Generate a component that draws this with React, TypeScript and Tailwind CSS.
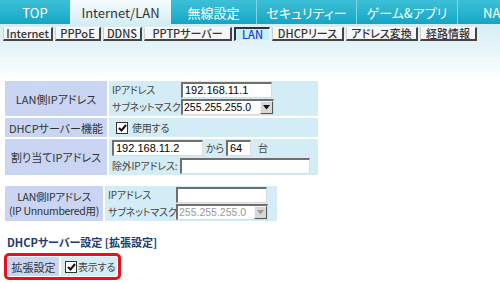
import React from "react";

const jp = "[font-family:'Noto_Sans_CJK_JP',sans-serif] [font-feature-settings:'palt']";

function Input({ value, w, disabled }: { value?: string; w: string; disabled?: boolean }) {
  return (
    <div
      className={`${w} shrink-0 h-[16px] bg-white border-t-2 border-l-2 border-t-[#6f6f6f] border-l-[#6f6f6f] border-b border-r border-b-[#dcdcdc] border-r-[#dcdcdc] flex items-center pl-[2px] text-[11px] leading-none [font-family:'Liberation_Sans',sans-serif] ${disabled ? "text-[#9a9a9a]" : "text-black"}`}
    >
      {value}
    </div>
  );
}

function Select({ value, w, disabled }: { value: string; w: string; disabled?: boolean }) {
  return (
    <div
      className={`${w} shrink-0 h-[16px] bg-white border-t-2 border-l-2 border-t-[#6f6f6f] border-l-[#6f6f6f] border-b border-r border-b-[#dcdcdc] border-r-[#dcdcdc] flex items-center text-[10.5px] leading-none [font-family:'Liberation_Sans',sans-serif] ${disabled ? "text-[#9a9a9a]" : "text-black"}`}
    >
      <span className="flex-1 pl-[1px]">{value}</span>
      <span className="w-[13px] h-[13px] bg-[#d8d8d8] border border-t-[#f4f4f4] border-l-[#f4f4f4] border-b-[#555] border-r-[#555] flex items-center justify-center">
        <svg width="7" height="5" viewBox="0 0 7 5">
          <path d="M0 0H7L3.5 4.5Z" fill={disabled ? "#9a9a9a" : "#111"} />
        </svg>
      </span>
    </div>
  );
}

function Check() {
  return (
    <span className="w-[12px] h-[12px] shrink-0 bg-white border border-[#333] flex items-center justify-center">
      <svg width="9" height="8" viewBox="0 0 9 8">
        <path d="M1 4L3.5 6.5L8 1" stroke="#111" strokeWidth="2" fill="none" />
      </svg>
    </span>
  );
}

const tabs = [
  { t: "TOP", w: "w-[70px]" },
  { t: "Internet/LAN", w: "w-[101px]", active: true },
  { t: "無線設定", w: "w-[85px]" },
  { t: "セキュリティー", w: "w-[100px]" },
  { t: "ゲーム&アプリ", w: "w-[101px]" },
  { t: "NAT", w: "w-[80px]", left: true },
];

const subs = [
  { t: "Internet", w: "w-[50px]" },
  { t: "PPPoE", w: "w-[46px]" },
  { t: "DDNS", w: "w-[39px]" },
  { t: "PPTPサーバー", w: "w-[88px]" },
  { t: "LAN", w: "w-[36px]", active: true },
  { t: "DHCPリース", w: "w-[72px]" },
  { t: "アドレス変換", w: "w-[72px]" },
  { t: "経路情報", w: "w-[57px]" },
];

const label = "bg-[#c9d5f2] flex items-center justify-center text-[11px] leading-[14px] text-[#333] whitespace-nowrap";
const small = "text-[10px] leading-[14px] text-[#444] whitespace-nowrap tracking-[-0.2px]";

export default function App() {
  return (
    <div className={`w-[500px] h-[283px] overflow-hidden bg-white text-[#222] ${jp}`}>
      {/* Top nav */}
      <div className="flex h-[24px] bg-gradient-to-b from-[#3cc0d8] to-[#10a6c4] whitespace-nowrap">
        {tabs.map((tb, i) => (
          <div
            key={i}
            className={`${tb.w} shrink-0 flex items-center text-[13px] leading-none ${
              tb.left ? "justify-start pl-[25px]" : "justify-center"
            } ${
              tb.active
                ? "bg-gradient-to-b from-[#f4fbfd] to-[#d6eef5] text-[#333]"
                : "text-white border-l border-[#7fd6e6]"
            } ${i === 0 || i === 2 ? "border-l-0" : ""}`}
          >
            {tb.t}
          </div>
        ))}
      </div>
      {/* Sub nav area */}
      <div className="bg-gradient-to-b from-[#d4edf5] to-white pt-[3px] pb-[40px] pl-[3px]">
        <div className="flex gap-[2px] whitespace-nowrap">
          {subs.map((s, i) => (
            <div
              key={i}
              className={`${s.w} shrink-0 h-[14px] flex items-center justify-center text-[11px] leading-none font-medium ${
                s.active
                  ? "bg-[#c8eef8] text-[#1c3fe0] font-bold border-t-2 border-l-2 border-b border-r border-t-[#333] border-l-[#333] border-b-[#e8f6fa] border-r-[#e8f6fa]"
                  : "bg-[#f6f6f6] text-[#333] border-t border-l border-b-2 border-r-2 border-t-[#ffffff] border-l-[#cfcfcf] border-b-[#444] border-r-[#444]"
              }`}
            >
              {s.t}
            </div>
          ))}
        </div>
      </div>

      <div className="pl-[5px]">
        {/* Table 1 */}
        <div className="w-[313px] flex flex-col gap-[2px]">
          <div className="flex gap-[2px] h-[35px]">
            <div className={`w-[102px] ${label}`}>LAN側IPアドレス</div>
            <div className="flex-1 bg-[#d3ecf6] flex flex-col justify-center gap-[1px] pl-[3px]">
              <div className="flex items-center">
                <span className={`w-[69px] ${small}`}>IPアドレス</span>
                <Input value="192.168.11.1" w="w-[91px]" />
              </div>
              <div className="flex items-center">
                <span className={`w-[69px] ${small}`}>サブネットマスク</span>
                <Select value="255.255.255.0" w="w-[93px]" />
              </div>
            </div>
          </div>
          <div className="flex gap-[2px] h-[19px]">
            <div className={`w-[102px] ${label}`}>DHCPサーバー機能</div>
            <div className="flex-1 bg-[#d3ecf6] flex items-center gap-[4px] pl-[7px]">
              <Check />
              <span className={small}>使用する</span>
            </div>
          </div>
          <div className="flex gap-[2px] h-[36px]">
            <div className={`w-[102px] ${label}`}>割り当てIPアドレス</div>
            <div className="flex-1 bg-[#d3ecf6] flex flex-col justify-center gap-[2px] pl-[3px]">
              <div className="flex items-center">
                <Input value="192.168.11.2" w="w-[91px]" />
                <span className={`w-[23px] pl-[3px] ${small}`}>から</span>
                <Input value="64" w="w-[25px]" />
                <span className={`pl-[7px] ${small}`}>台</span>
              </div>
              <div className="flex items-center">
                <span className={`w-[68px] ${small}`}>除外IPアドレス:</span>
                <Input w="w-[130px]" />
              </div>
            </div>
          </div>
        </div>

        {/* Table 2 */}
        <div className="w-[272px] flex gap-[2px] h-[35px] mt-[11px]">
          <div className="w-[98px] bg-[#c9d5f2] flex flex-col items-center justify-center text-[10.5px] leading-[14px] text-[#333] whitespace-nowrap tracking-[-0.3px]">
            <span>LAN側IPアドレス</span>
            <span>(IP Unnumbered用)</span>
          </div>
          <div className="flex-1 bg-[#d3ecf6] flex flex-col justify-center gap-[1px] pl-[3px]">
            <div className="flex items-center">
              <span className={`w-[68px] ${small}`}>IPアドレス</span>
              <Input w="w-[91px]" />
            </div>
            <div className="flex items-center">
              <span className={`w-[68px] ${small}`}>サブネットマスク</span>
              <Select value="255.255.255.0" w="w-[92px]" disabled />
            </div>
          </div>
        </div>

        <div className="mt-[13px] ml-[2px] text-[11px] font-bold text-[#1d3b6e] leading-[16px] whitespace-nowrap">DHCPサーバー設定 [拡張設定]</div>

        <div className="mt-[3px] w-[117px] h-[27px] border-[3px] border-[#e8101a] rounded-[5px] flex gap-[2px] p-[1px] ml-[-1px]">
          <div className={`w-[51px] ${label}`}>拡張設定</div>
          <div className="flex-1 bg-[#d3ecf6] flex items-center gap-[1px] pl-[4px]">
            <Check />
            <span className={small}>表示する</span>
          </div>
        </div>
      </div>
    </div>
  );
}
